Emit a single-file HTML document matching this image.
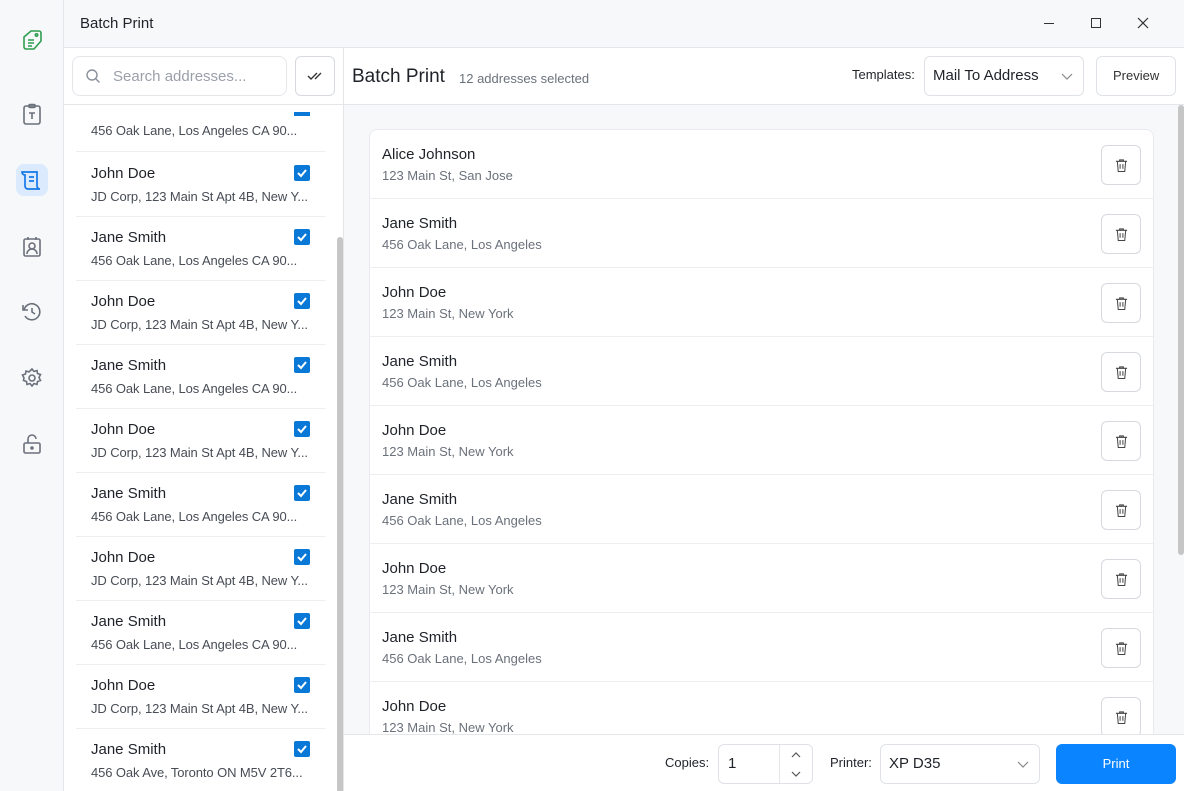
<!DOCTYPE html>
<html><head><meta charset="utf-8"><style>
*{box-sizing:border-box;margin:0;padding:0}
body{width:1184px;height:791px;overflow:hidden;font-family:"Liberation Sans",sans-serif;background:#f7f8fa;position:relative;color:#1f2329}
.side{position:absolute;left:0;top:0;width:64px;height:791px;background:#f7f8fa;border-right:1px solid #e4e6ea}
.side svg{position:absolute;left:20px}
.title{position:absolute;left:64px;top:0;right:0;height:48px;background:#f7f8fa;border-bottom:1px solid #e4e6ea}
.title span{position:absolute;left:16px;top:15px;font-size:15px}
.left{position:absolute;left:64px;top:48px;width:280px;height:743px;background:#fff;border-right:1px solid #e4e6ea;overflow:hidden}
.search{position:absolute;left:8px;top:8px;width:215px;height:40px;border:1px solid #e4e6ea;border-radius:8px}
.search span{position:absolute;left:40px;top:11px;font-size:15px;color:#9aa0aa}
.chk{position:absolute;left:231px;top:8px;width:40px;height:40px;border:1px solid #d6d9de;border-radius:6px}
.lhead{position:absolute;left:0;top:56px;width:280px;border-top:1px solid #e4e6ea}
.row{position:absolute;left:12px;width:249px;height:64px;border-bottom:1px solid #eceef1}
.row .n{position:absolute;left:15px;top:12px;font-size:15px}
.row .a{position:absolute;left:15px;top:36px;font-size:13px;color:#474c55;white-space:nowrap;letter-spacing:-0.1px}
.cb{position:absolute;left:218px;top:12px;width:16px;height:16px;background:#0a78d7;border-radius:2px}
.lscroll{position:absolute;left:273px;top:189px;width:6px;height:560px;background:#c6c6c6;border-radius:3px}
.mhead{position:absolute;left:344px;top:48px;right:0;height:57px;background:#fff;border-bottom:1px solid #e4e6ea}
.card{position:absolute;left:369px;top:129px;width:785px;height:640px;background:#fff;border:1px solid #e8eaed;border-radius:8px;overflow:hidden}
.crow{position:absolute;left:0;width:785px;height:69px;border-bottom:1px solid #eceef1}
.crow .n{position:absolute;left:12px;top:16px;font-size:15px}
.crow .a{position:absolute;left:12px;top:38px;font-size:13px;color:#6b717b}
.del{position:absolute;left:731px;top:15px;width:40px;height:40px;border:1px solid #d6d9de;border-radius:6px}
.del svg{position:absolute;left:13px;top:12px}
.rscroll{position:absolute;left:1178px;top:105px;width:6px;height:450px;background:#c6c6c6;border-radius:3px}
.foot{position:absolute;left:344px;top:734px;right:0;height:57px;background:#fff;border-top:1px solid #e4e6ea}
.box{position:absolute;border:1px solid #dfe2e6;border-radius:6px;background:#fff}
.chev{position:absolute}
</style></head><body>
<div class="side">
<svg style="top:28px" width="24" height="24" viewBox="0 0 24 24" fill="none" stroke="#2f9e4f" stroke-width="1.6"><path d="M4 9l7-6h8a2 2 0 0 1 2 2v8l-7 8H6a2 2 0 0 1-2-2z"/><circle cx="16.5" cy="7" r="1.2"/><path d="M8 12h6M8 15h6M8 18h4"/></svg>
<svg style="top:102px" width="24" height="24" viewBox="0 0 24 24" fill="none" stroke="#6b717b" stroke-width="1.6"><rect x="4" y="4" width="16" height="18" rx="2"/><rect x="9" y="2.5" width="6" height="3" rx="1"/><path d="M9 11h6M12 11v6"/></svg>
<div style="position:absolute;left:16px;top:164px;width:32px;height:32px;background:#dbeafc;border-radius:8px"></div>
<svg style="top:168px" width="24" height="24" viewBox="0 0 24 24" fill="none" stroke="#1677e8" stroke-width="1.7"><path d="M5 4h12v14a3 3 0 0 0 3 3H8a3 3 0 0 1-3-3V7a3 3 0 0 1-3-3z"/><path d="M9 9h5M9 13h5"/></svg>
<svg style="top:235px" width="24" height="24" viewBox="0 0 24 24" fill="none" stroke="#6b717b" stroke-width="1.6"><rect x="4" y="4" width="16" height="17" rx="1.5"/><path d="M8 2v3M16 2v3"/><circle cx="12" cy="11" r="3"/><path d="M7 19a5 5 0 0 1 10 0"/></svg>
<svg style="top:300px" width="24" height="24" viewBox="0 0 24 24" fill="none" stroke="#6b717b" stroke-width="1.6"><path d="M4 10a8 8 0 1 1 1 6"/><path d="M3 5v5h5"/><path d="M12 8v4l3 2"/></svg>
<svg style="top:366px" width="24" height="24" viewBox="0 0 24 24" fill="none" stroke="#6b717b" stroke-width="1.6"><circle cx="12" cy="12" r="3"/><path d="M12 3l2 2.5 3-1 .5 3 3 1-1.5 3 1.5 3-3 1-.5 3-3-1-2 2.5-2-2.5-3 1-.5-3-3-1L4 12 2.5 9l3-1 .5-3 3 1z"/></svg>
<svg style="top:432px" width="24" height="24" viewBox="0 0 24 24" fill="none" stroke="#6b717b" stroke-width="1.6"><rect x="4" y="11" width="16" height="10" rx="1.5"/><path d="M8 11V7a4 4 0 0 1 8 0"/><circle cx="12" cy="16" r="1" fill="#6b717b"/></svg>
</div>
<div class="title"><span>Batch Print</span>
<div style="position:absolute;left:980px;top:23px;width:10px;border-top:1px solid #333"></div>
<div style="position:absolute;left:1027px;top:18px;width:10px;height:10px;border:1px solid #333"></div>
<svg style="position:absolute;left:1073px;top:17px" width="12" height="12" viewBox="0 0 12 12" stroke="#333" stroke-width="1.2"><path d="M1 1l10 10M11 1L1 11"/></svg>
</div>
<div class="left">
<div class="search"><svg style="position:absolute;left:12px;top:11px" width="16" height="16" viewBox="0 0 16 16" fill="none" stroke="#8a9099" stroke-width="1.4"><circle cx="7" cy="7" r="5"/><path d="M11 11l3.5 3.5"/></svg><span>Search addresses...</span></div>
<div class="chk"><svg style="position:absolute;left:11px;top:12px" width="18" height="14" viewBox="0 0 18 14" fill="none" stroke="#333" stroke-width="1.4"><path d="M1 7l3 3 6-6M8 10l6-6"/></svg></div>
<div class="lhead"></div>
<div class="row" style="top:40px"><div class="cb" style="top:24px;height:4px;border-radius:0"></div><div class="a" style="top:35px">456 Oak Lane, Los Angeles CA 90...</div></div>
<div id="rows"></div>
<div class="lscroll"></div>
</div>
<div class="mhead">
<div style="position:absolute;left:8px;top:18px;font-size:19px">Batch Print</div>
<div style="position:absolute;left:115px;top:23px;font-size:13px;color:#6b717b">12 addresses selected</div>
<div style="position:absolute;left:508px;top:19px;font-size:13px">Templates:</div>
<div class="box" style="left:580px;top:8px;width:160px;height:40px"><span style="position:absolute;left:8px;top:10px;font-size:15px">Mail To Address</span><svg class="chev" style="left:136px;top:16px" width="12" height="7" viewBox="0 0 12 7" fill="none" stroke="#888" stroke-width="1.2"><path d="M1 1l5 5 5-5"/></svg></div>
<div class="box" style="left:752px;top:8px;width:80px;height:40px"><span style="position:absolute;left:16px;top:11px;font-size:13px;color:#333">Preview</span></div>
</div>
<div class="card" id="card"></div>
<div class="rscroll"></div>
<div class="foot">
<div style="position:absolute;left:321px;top:20px;font-size:13px">Copies:</div>
<div class="box" style="left:374px;top:9px;width:95px;height:40px"><span style="position:absolute;left:9px;top:10px;font-size:15px">1</span><div style="position:absolute;left:60px;top:0;height:38px;border-left:1px solid #e4e6ea"></div><svg class="chev" style="left:72px;top:7px" width="10" height="6" viewBox="0 0 10 6" fill="none" stroke="#555" stroke-width="1.2"><path d="M1 5l4-4 4 4"/></svg><svg class="chev" style="left:72px;top:26px" width="10" height="6" viewBox="0 0 10 6" fill="none" stroke="#555" stroke-width="1.2"><path d="M1 1l4 4 4-4"/></svg></div>
<div style="position:absolute;left:486px;top:20px;font-size:13px">Printer:</div>
<div class="box" style="left:536px;top:9px;width:160px;height:40px"><span style="position:absolute;left:8px;top:10px;font-size:15px">XP D35</span><svg class="chev" style="left:136px;top:16px" width="12" height="7" viewBox="0 0 12 7" fill="none" stroke="#888" stroke-width="1.2"><path d="M1 1l5 5 5-5"/></svg></div>
<div style="position:absolute;left:712px;top:9px;width:120px;height:40px;background:#0a84ff;border-radius:6px;color:#fff;font-size:13px;text-align:center;line-height:40px">Print</div>
</div>
<script>
var L=[["John Doe","JD Corp, 123 Main St Apt 4B, New Y..."],["Jane Smith","456 Oak Lane, Los Angeles CA 90..."]];
var h="";for(var i=0;i<10;i++){var d=i==9?["Jane Smith","456 Oak Ave, Toronto ON M5V 2T6..."]:L[i%2];
h+='<div class="row" style="top:'+(105+i*64)+'px"><div class="n">'+d[0]+'</div><div class="cb"><svg width="16" height="16" viewBox="0 0 16 16" fill="none" stroke="#fff" stroke-width="2"><path d="M4 8l3 3 5-6"/></svg></div><div class="a">'+d[1]+'</div></div>';}
document.getElementById("rows").innerHTML=h;
var C=[["Alice Johnson","123 Main St, San Jose"]];for(i=0;i<8;i++)C.push(i%2?["John Doe","123 Main St, New York"]:["Jane Smith","456 Oak Lane, Los Angeles"]);
h="";for(i=0;i<9;i++)h+='<div class="crow" style="top:'+(i*69)+'px"><div class="n">'+C[i][0]+'</div><div class="a">'+C[i][1]+'</div><div class="del"><svg width="13" height="15" viewBox="0 0 14 16" fill="none" stroke="#444" stroke-width="1.1"><path d="M1 3.5h12M5 3.5V2h4v1.5M2.5 3.5l1 11h7l1-11M5.5 6.5v5M8.5 6.5v5"/></svg></div></div>';
document.getElementById("card").innerHTML=h;
</script>
</body></html>
